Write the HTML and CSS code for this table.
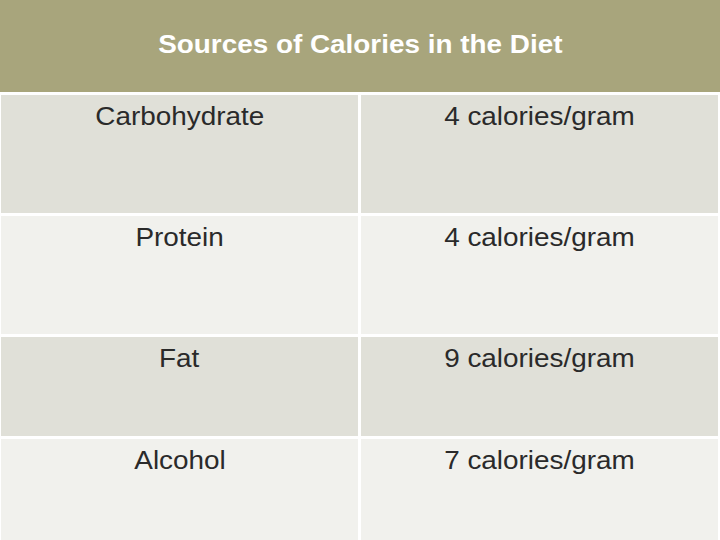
FILE: index.html
```html
<!DOCTYPE html>
<html>
<head>
<meta charset="utf-8">
<link rel="stylesheet" href="styles.css">
</head>
<body>
<div class="table">
  <div class="header"><span class="wide">Sources of Calories in the Diet</span></div>
  <div class="grid">
    <div class="cell odd"><span class="wide">Carbohydrate</span></div>
    <div class="cell odd"><span class="wide">4 calories/gram</span></div>
    <div class="cell even"><span class="wide">Protein</span></div>
    <div class="cell even"><span class="wide">4 calories/gram</span></div>
    <div class="cell odd"><span class="wide">Fat</span></div>
    <div class="cell odd"><span class="wide">9 calories/gram</span></div>
    <div class="cell even"><span class="wide">Alcohol</span></div>
    <div class="cell even"><span class="wide">7 calories/gram</span></div>
  </div>
</div>
</body>
</html>
```
FILE: styles.css
```css
html, body {
  margin: 0;
  padding: 0;
  background: #ffffff;
  width: 720px;
  height: 540px;
  overflow: hidden;
  font-family: "Liberation Sans", Arial, sans-serif;
}
.table {
  display: flex;
  flex-direction: column;
  gap: 3px;
  width: 720px;
  height: 540px;
}
.wide {
  display: inline-block;
  transform: scaleX(1.115);
  transform-origin: center;
  white-space: nowrap;
}
.header {
  height: 92px;
  background: #a8a57c;
  color: #ffffff;
  font-weight: bold;
  font-size: 25px;
  display: flex;
  align-items: center;
  justify-content: center;
  padding-bottom: 4px;
  box-sizing: border-box;
}
.grid {
  flex: 1;
  display: grid;
  grid-template-columns: 357px 357px;
  grid-template-rows: 118px 118px 99px 1fr;
  column-gap: 3px;
  row-gap: 3px;
  padding: 0 2px 0 1px;
}
.cell {
  font-size: 25px;
  color: #2a2a2a;
  text-align: center;
  padding-top: 7px;
  box-sizing: border-box;
}
.odd { background: #e0e0d8; }
.even { background: #f1f1ed; }
```
